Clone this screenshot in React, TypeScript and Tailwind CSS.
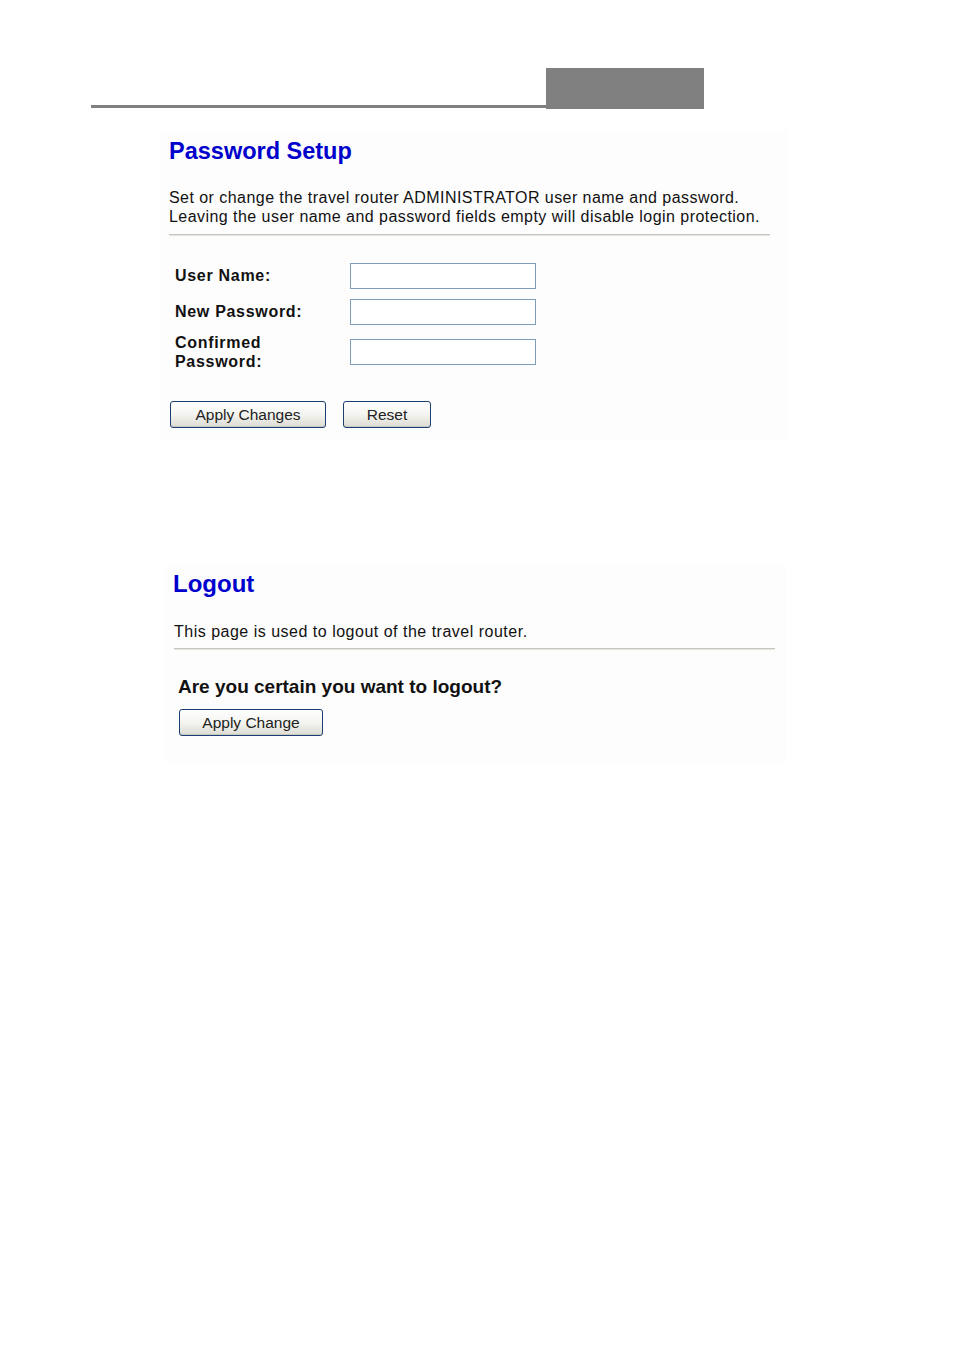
import React from "react";

const btn =
  "h-[27px] rounded-[3px] border border-[#1c3f73] bg-gradient-to-b from-[#ffffff] via-[#f4f4f0] to-[#dcdcd4] text-[15.5px] text-[#222] leading-none shadow-[inset_0_-1px_0_#c8c8c0]";

function Field() {
  return <div className="w-[186px] h-[26px] border border-[#7f9db9] bg-white" />;
}

export default function App() {
  return (
    <div className="w-[954px] h-[1350px] bg-white relative" style={{ fontFamily: '"Liberation Sans", Arial, sans-serif' }}>
      {/* header */}
      <div className="pt-[68px] pl-[91px] flex items-end">
        <div className="w-[455px] h-[3px] bg-[#808080] mb-[1px]" />
        <div className="w-[158px] h-[41px] bg-[#808080]" />
      </div>

      {/* Password Setup panel */}
      <div className="ml-[160px] mt-[21px] w-[628px] h-[310px] bg-[#fdfdfd] pl-[9px] pt-[6px]">
        <h1 className="text-[23.5px] font-bold text-[#0000cc] leading-[30px]">Password Setup</h1>
        <div className="mt-[22px] text-[16px] leading-[19px] text-[#111]">
          <p className="tracking-[0.45px]">Set or change the travel router ADMINISTRATOR user name and password.</p>
          <p className="tracking-[0.45px]">Leaving the user name and password fields empty will disable login protection.</p>
        </div>
        <div className="mt-[8px] w-[601px] h-[2px] bg-[#c8c8c0] border-b border-[#e4e4e0]" />
        <div className="mt-[27px] pl-[6px] flex flex-col">
          <div className="flex items-center h-[26px]">
            <div className="w-[175px] text-[16px] font-bold tracking-[0.7px] text-[#111]">User Name:</div>
            <Field />
          </div>
          <div className="flex items-center h-[26px] mt-[10px]">
            <div className="w-[175px] text-[16px] font-bold tracking-[0.7px] text-[#111]">New Password:</div>
            <Field />
          </div>
          <div className="flex items-center mt-[8px]">
            <div className="w-[175px] text-[16px] font-bold tracking-[0.7px] text-[#111] leading-[19px]">
              Confirmed
              <br />
              Password:
            </div>
            <Field />
          </div>
        </div>
        <div className="mt-[30px] pl-[1px] flex gap-[17px]">
          <button className={btn + " w-[156px]"}>Apply Changes</button>
          <button className={btn + " w-[88px]"}>Reset</button>
        </div>
      </div>

      {/* Logout panel */}
      <div className="ml-[165px] mt-[125px] w-[621px] h-[197px] bg-[#fdfdfd] pl-[8px] pt-[4px]">
        <h1 className="text-[24px] font-bold text-[#0000cc] leading-[30px]">Logout</h1>
        <p className="mt-[23px] text-[16px] leading-[19px] text-[#111] pl-[1px] tracking-[0.5px]">This page is used to logout of the travel router.</p>
        <div className="mt-[7px] ml-[1px] w-[601px] h-[2px] bg-[#c8c8c0] border-b border-[#e4e4e0]" />
        <p className="mt-[26px] pl-[5px] text-[19px] font-bold text-[#111] leading-[22px]">Are you certain you want to logout?</p>
        <div className="mt-[11px] pl-[6px]">
          <button className={btn + " w-[144px]"}>Apply Change</button>
        </div>
      </div>
    </div>
  );
}
